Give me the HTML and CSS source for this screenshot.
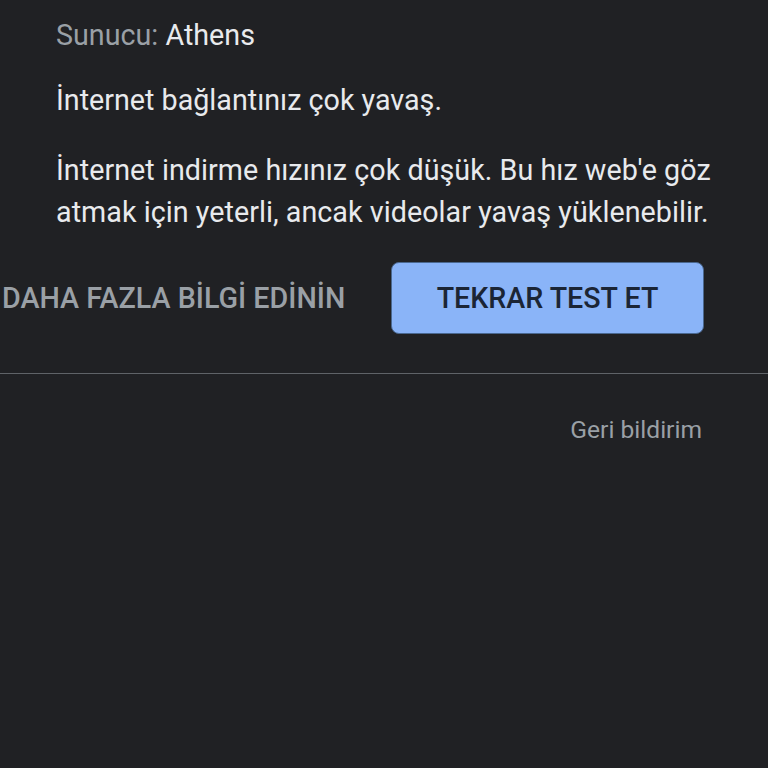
FILE: index.html
```html
<!DOCTYPE html>
<html lang="tr">
<head>
<meta charset="utf-8">
<link rel="stylesheet" href="styles.css">
</head>
<body>
<main class="page">
  <section class="content">
    <p class="server"><span class="label">Sunucu:</span> Athens</p>
    <p class="status">İnternet bağlantınız çok yavaş.</p>
    <p class="desc">İnternet indirme hızınız çok düşük. Bu hız web'e göz atmak için yeterli, ancak videolar yavaş yüklenebilir.</p>
  </section>
  <div class="actions">
    <span class="more">DAHA FAZLA BİLGİ EDİNİN</span>
    <button class="retry">TEKRAR TEST ET</button>
  </div>
  <hr class="divider">
  <div class="feedback-row">
    <span class="feedback">Geri bildirim</span>
  </div>
</main>
</body>
</html>
```
FILE: styles.css
```css
html, body {
  margin: 0;
  padding: 0;
  background: #202124;
  width: 768px;
  height: 768px;
  overflow: hidden;
}
.page {
  font-family: Roboto, "Noto Sans", sans-serif;
  color: #e8eaed;
}
.content {
  padding: 0 0 0 56px;
  width: 690px;
}
p { margin: 0; }
.server {
  font-size: 28.7px;
  line-height: 40px;
  padding-top: 15px;
}
.label { color: #9aa0a6; }
.status {
  font-size: 28.7px;
  line-height: 40px;
  margin-top: 25px;
}
.desc {
  font-size: 28.7px;
  line-height: 42px;
  margin-top: 29px;
  letter-spacing: 0.04px;
}
.actions {
  display: flex;
  align-items: center;
  justify-content: space-between;
  margin-top: 29px;
  padding-right: 64px;
}
.more {
  font-size: 28.7px;
  font-weight: 500;
  color: #9aa0a6;
  margin-left: 2px;
}
.retry {
  width: 313px;
  height: 72px;
  background: #8ab4f8;
  border: 1px solid #4a6890;
  border-radius: 8px;
  font-family: Roboto, sans-serif;
  font-size: 28.6px;
  font-weight: 500;
  color: #1b2535;
  padding: 0;
}
.divider {
  border: 0;
  border-top: 1px solid #5f6368;
  margin: 39px 0 0 0;
}
.feedback-row {
  display: flex;
  justify-content: flex-end;
  padding-right: 66px;
  margin-top: 41px;
}
.feedback {
  font-size: 24.6px;
  line-height: 30px;
  color: #9aa0a6;
}
```
